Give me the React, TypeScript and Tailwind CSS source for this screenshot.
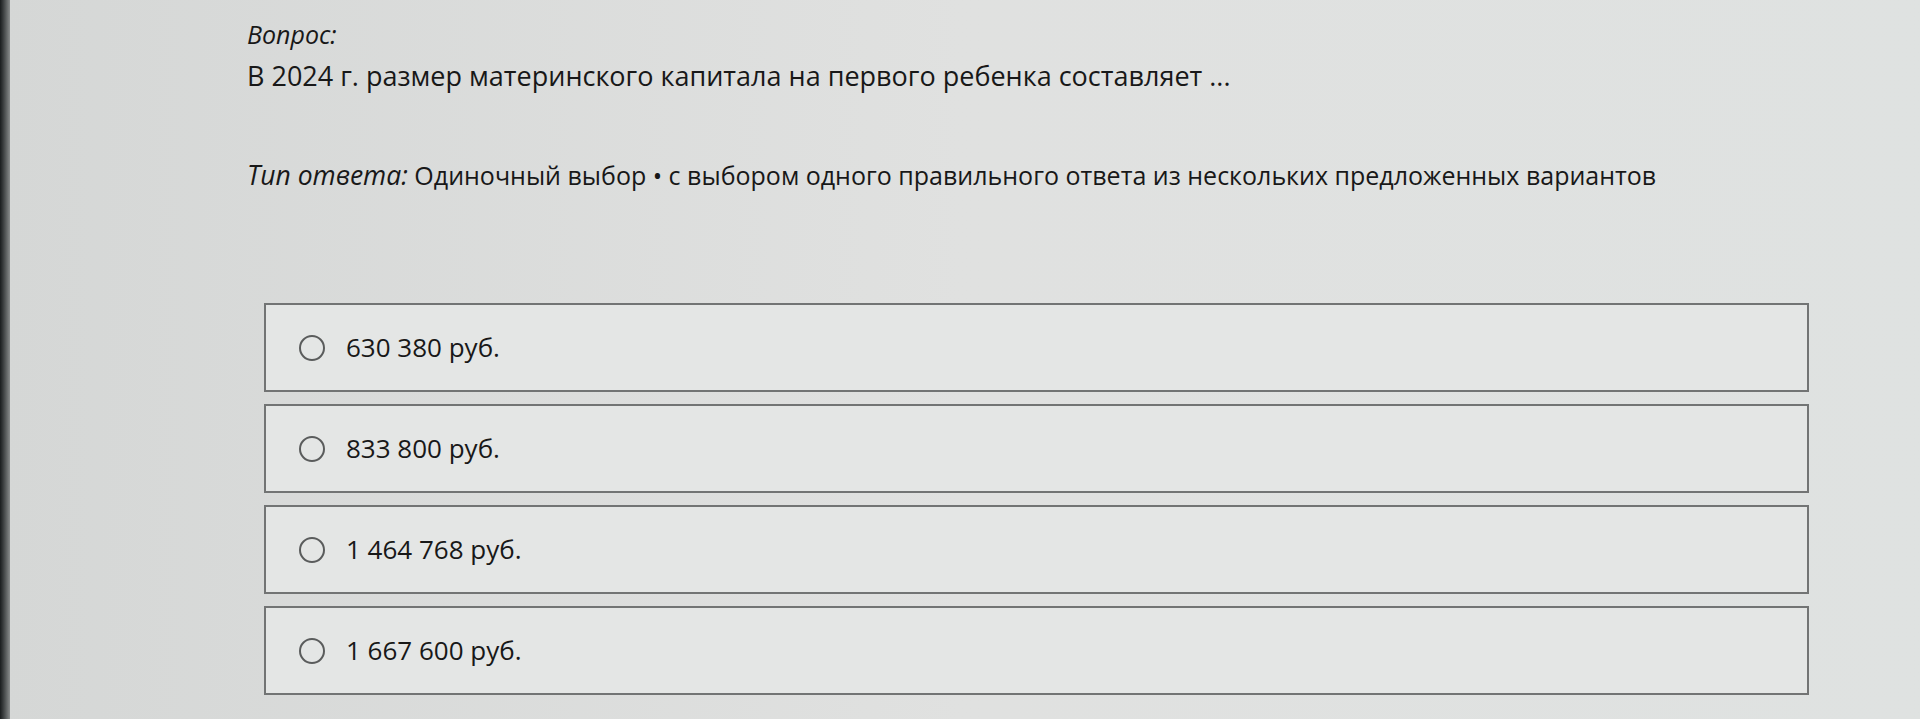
import React from "react";

const answers = ["630 380 руб.", "833 800 руб.", "1 464 768 руб.", "1 667 600 руб."];

export default function App() {
  return (
    <div className="flex h-[719px] w-full overflow-hidden bg-gradient-to-r from-[#d5d7d6] via-[#e0e1e0] to-[#dfe2e1] text-[#181818] [font-family:'Open_Sans','Noto_Sans',sans-serif]">
      <div className="w-[10px] shrink-0 bg-gradient-to-r from-[#1a1d1e] to-[#8a8d8d]" />
      <main className="flex flex-1 flex-col pl-[237px] pt-[18px]">
        <p className="text-[25px] font-medium italic leading-[32px]">Вопрос:</p>
        <p className="mt-[9px] text-[27px] leading-[34px]">
          В 2024 г. размер материнского капитала на первого ребенка составляет ...
        </p>
        <p className="mt-[66px] text-[25px] leading-[32px]">
          <span className="text-[26.5px] font-medium italic">Тип ответа:</span> Одиночный выбор • с выбором одного
          правильного ответа из нескольких предложенных вариантов
        </p>

        <div className="ml-[17px] mt-[112px] flex w-[1545px] flex-col gap-[12px]">
          {answers.map((answer) => (
            <label
              key={answer}
              className="flex h-[89px] items-center border-2 border-[#727474] bg-[#e4e6e5] pl-[33px]"
            >
              <span className="h-[26px] w-[26px] shrink-0 rounded-full border-2 border-[#5a5c5c]" />
              <span className="ml-[21px] text-[26px]">{answer}</span>
            </label>
          ))}
        </div>
      </main>
    </div>
  );
}
